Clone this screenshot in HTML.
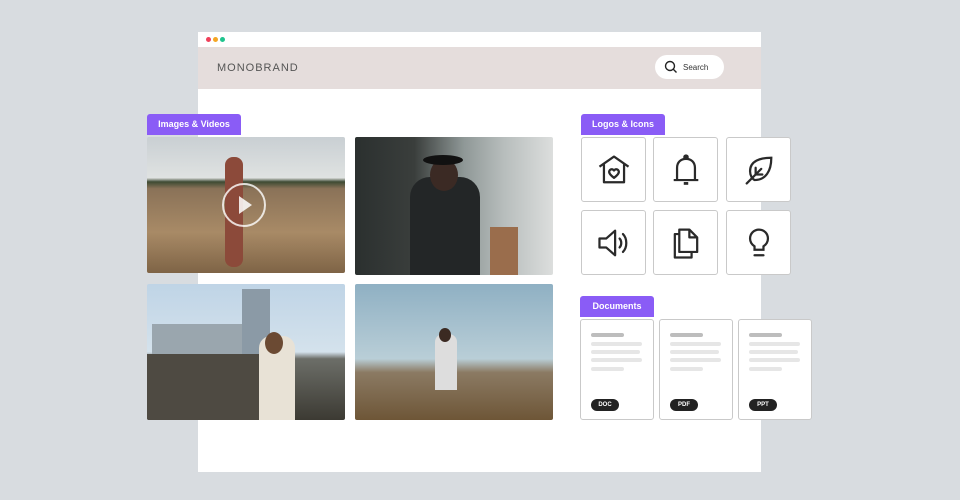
<!DOCTYPE html><html><head><style>
body{margin:0;width:960px;height:500px;background:#d8dce0;position:relative;overflow:hidden;font-family:"Liberation Sans",sans-serif}
.a{position:absolute}
.win{left:198px;top:32px;width:563px;height:440px;background:#fff}
.hdr{left:198px;top:47px;width:563px;height:42px;background:#e5dddc}
.dot{width:5px;height:5px;border-radius:50%;top:37px}
.lbl{background:#8a5cf6;color:#fff;font-size:9px;font-weight:bold;border-radius:3px 3px 0 0;line-height:21px;text-align:center}
.ph{border-radius:2px;overflow:hidden}
.ic{width:63px;height:63px;border:1px solid #c9c9c9;border-radius:3px;background:#fff;display:flex;align-items:center;justify-content:center}
.ic svg{width:38px;height:38px}
.doc{width:72px;height:99px;border:1px solid #c9c9c9;border-radius:3px;background:#fff}
.bar{position:absolute;height:4px;border-radius:2px;background:#e6e6e6;left:10px}
.pill{position:absolute;left:10px;bottom:8px;background:#222;color:#fff;font-size:6px;font-weight:bold;border-radius:6px;width:28px;height:12px;line-height:12px;text-align:center}
</style></head><body>
<div class="a win"></div>
<div class="a dot" style="left:206px;background:#f0405a"></div>
<div class="a dot" style="left:213px;background:#f5a623"></div>
<div class="a dot" style="left:220px;background:#1fc48e"></div>
<div class="a hdr"></div>
<div class="a" style="left:217px;top:62px;font-size:11px;letter-spacing:1px;color:#555">MONOBRAND</div>
<div class="a" style="left:655px;top:55px;width:69px;height:24px;background:#fff;border-radius:12px"></div>
<svg class="a" style="left:664px;top:60px" width="14" height="14" viewBox="0 0 14 14"><circle cx="6" cy="6" r="4.5" fill="none" stroke="#222" stroke-width="1.4"/><path d="M9.3 9.3L12.5 12.5" stroke="#222" stroke-width="1.4"/></svg>
<div class="a" style="left:683px;top:63px;font-size:8px;color:#333">Search</div>

<div class="a lbl" style="left:147px;top:114px;width:94px">Images &amp; Videos</div>
<div class="a ph" style="left:147px;top:137px;width:198px;height:136px;background:linear-gradient(#c9cfd3 0,#dfe2e1 30%,#3e4a33 33%,#8a7258 38%,#a88a66 70%,#7f6446 100%)">
<div class="a" style="left:78px;top:20px;width:18px;height:110px;background:#8c4a3a;border-radius:8px"></div>
<div class="a" style="left:75px;top:46px;width:44px;height:44px;border:2px solid rgba(255,255,255,.8);border-radius:50%;box-sizing:border-box"></div>
<div class="a" style="left:92px;top:59px;border-left:13px solid rgba(255,255,255,.85);border-top:9px solid transparent;border-bottom:9px solid transparent"></div></div>
<div class="a ph" style="left:355px;top:137px;width:198px;height:138px;background:linear-gradient(90deg,#2b302f 0,#3a3e3c 30%,#8f9897 55%,#b7bdbc 75%,#dcdedd 100%)">
<div class="a" style="left:55px;top:40px;width:70px;height:98px;background:#232627;border-radius:20px 20px 0 0"></div>
<div class="a" style="left:75px;top:22px;width:28px;height:32px;background:#3b2a24;border-radius:50%"></div>
<div class="a" style="left:68px;top:18px;width:40px;height:10px;background:#111;border-radius:50%"></div>
<div class="a" style="left:135px;top:90px;width:28px;height:48px;background:#9a6d4c"></div></div>
<div class="a ph" style="left:147px;top:284px;width:198px;height:136px;background:linear-gradient(#bfd4e6 0,#d4e2ec 50%,#6c6e68 55%,#3c3a33 100%)">
<div class="a" style="left:5px;top:40px;width:90px;height:40px;background:#9aa6ae"></div>
<div class="a" style="left:95px;top:5px;width:28px;height:80px;background:#8b9aa6"></div>
<div class="a" style="left:0;top:70px;width:120px;height:66px;background:#4e4a42"></div>
<div class="a" style="left:112px;top:52px;width:36px;height:84px;background:#e8e2d6;border-radius:12px 12px 0 0"></div>
<div class="a" style="left:118px;top:48px;width:18px;height:22px;background:#6b4a33;border-radius:50%"></div></div>
<div class="a ph" style="left:355px;top:284px;width:198px;height:136px;background:linear-gradient(#8fb0c3 0,#b9ced7 55%,#8b7a63 65%,#6e5637 100%)">
<div class="a" style="left:80px;top:50px;width:22px;height:56px;background:#ddd;border-radius:8px 8px 0 0"></div>
<div class="a" style="left:84px;top:44px;width:12px;height:14px;background:#3b2a22;border-radius:50%"></div></div>

<div class="a lbl" style="left:581px;top:114px;width:84px">Logos &amp; Icons</div>
<div class="a ic" style="left:581px;top:137px"><svg viewBox="0 0 34 34" fill="none" stroke="#2a2a2a" stroke-width="2" stroke-linejoin="round"><path d="M4 14L17 5L30 14M8 12V28H26V12"/><path d="M17 24C13 21 12 19 13 17.5C14 16 16 16 17 17.5C18 16 20 16 21 17.5C22 19 21 21 17 24Z"/></svg></div>
<div class="a ic" style="left:653px;top:137px"><svg viewBox="0 0 34 34" fill="none" stroke="#2a2a2a" stroke-width="2"><path d="M9 26V15C9 10 12.5 7 17 7S25 10 25 15V26M6 26H28"/><circle cx="17" cy="5.5" r="1.5" fill="#2a2a2a"/><path d="M15 29H19" stroke-width="2.5"/></svg></div>
<div class="a ic" style="left:726px;top:137px"><svg viewBox="0 0 34 34" fill="none" stroke="#2a2a2a" stroke-width="2" stroke-linecap="round"><path d="M28 6C18 6 9 9 9 18C9 22 11 25 13 26C23 26 28 18 28 6Z"/><path d="M6 29L19 16M14 21V15M14 21H20"/></svg></div>
<div class="a ic" style="left:581px;top:210px"><svg viewBox="0 0 34 34" fill="none" stroke="#2a2a2a" stroke-width="2" stroke-linejoin="round" stroke-linecap="round"><path d="M4 13H10L18 6V28L10 21H4Z"/><path d="M22 13C24 15 24 19 22 21M25 9C29 13 29 21 25 25"/></svg></div>
<div class="a ic" style="left:653px;top:210px"><svg viewBox="0 0 34 34" fill="none" stroke="#2a2a2a" stroke-width="2" stroke-linejoin="round"><path d="M11 5H20L27 12V25H11Z M20 5V12H27"/><path d="M11 9H7V30H22V25"/></svg></div>
<div class="a ic" style="left:726px;top:210px"><svg viewBox="0 0 34 34" fill="none" stroke="#2a2a2a" stroke-width="2" stroke-linecap="round"><path d="M13 23V20C10 18 9 15.5 9 13C9 8.5 12.5 5 17 5S25 8.5 25 13C25 15.5 24 18 21 20V23Z"/><path d="M13 28H21"/></svg></div>

<div class="a lbl" style="left:580px;top:296px;width:74px;font-size:9px">Documents</div>
<div class="a doc" style="left:580px;top:319px"><div class="bar" style="top:13px;width:33px;background:#bdbdbd"></div><div class="bar" style="top:22px;width:51px"></div><div class="bar" style="top:30px;width:49px"></div><div class="bar" style="top:38px;width:51px"></div><div class="bar" style="top:47px;width:33px"></div><div class="pill">DOC</div></div>
<div class="a doc" style="left:659px;top:319px"><div class="bar" style="top:13px;width:33px;background:#bdbdbd"></div><div class="bar" style="top:22px;width:51px"></div><div class="bar" style="top:30px;width:49px"></div><div class="bar" style="top:38px;width:51px"></div><div class="bar" style="top:47px;width:33px"></div><div class="pill">PDF</div></div>
<div class="a doc" style="left:738px;top:319px"><div class="bar" style="top:13px;width:33px;background:#bdbdbd"></div><div class="bar" style="top:22px;width:51px"></div><div class="bar" style="top:30px;width:49px"></div><div class="bar" style="top:38px;width:51px"></div><div class="bar" style="top:47px;width:33px"></div><div class="pill">PPT</div></div>
</body></html>
